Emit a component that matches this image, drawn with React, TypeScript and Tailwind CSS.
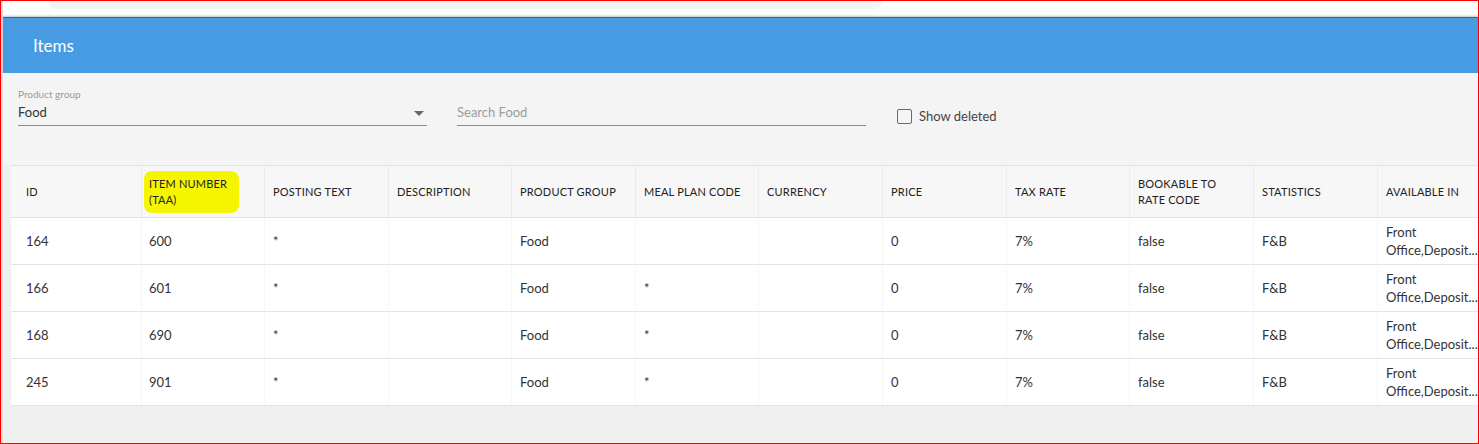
type Row = {
  id: string
  itemNumber: string
  postingText: string
  description: string
  productGroup: string
  mealPlan: string
  currency: string
  price: string
  taxRate: string
  bookable: string
  statistics: string
  availableIn: string
}

const columns = [
  { label: "ID", width: "w-[131px]", pad: "pl-[15px]" },
  { label: "ITEM NUMBER (TAA)", width: "w-[123px]", pad: "pl-[7px]", highlight: true },
  { label: "POSTING TEXT", width: "w-[124px]", pad: "pl-[8px]" },
  { label: "DESCRIPTION", width: "w-[123px]", pad: "pl-[8px]" },
  { label: "PRODUCT GROUP", width: "w-[124px]", pad: "pl-[8px]" },
  { label: "MEAL PLAN CODE", width: "w-[123px]", pad: "pl-[8px]" },
  { label: "CURRENCY", width: "w-[124px]", pad: "pl-[8px]" },
  { label: "PRICE", width: "w-[124px]", pad: "pl-[8px]" },
  { label: "TAX RATE", width: "w-[123px]", pad: "pl-[8px]" },
  { label: "BOOKABLE TO RATE CODE", width: "w-[124px]", pad: "pl-[8px]" },
  { label: "STATISTICS", width: "w-[124px]", pad: "pl-[8px]" },
  { label: "AVAILABLE IN", width: "w-[123px]", pad: "pl-[8px]" },
]

const rows: Row[] = [
  { id: "164", itemNumber: "600", postingText: "*", description: "", productGroup: "Food", mealPlan: "", currency: "", price: "0", taxRate: "7%", bookable: "false", statistics: "F&B", availableIn: "Office,Deposit..." },
  { id: "166", itemNumber: "601", postingText: "*", description: "", productGroup: "Food", mealPlan: "*", currency: "", price: "0", taxRate: "7%", bookable: "false", statistics: "F&B", availableIn: "Office,Deposit..." },
  { id: "168", itemNumber: "690", postingText: "*", description: "", productGroup: "Food", mealPlan: "*", currency: "", price: "0", taxRate: "7%", bookable: "false", statistics: "F&B", availableIn: "Office,Deposit..." },
  { id: "245", itemNumber: "901", postingText: "*", description: "", productGroup: "Food", mealPlan: "*", currency: "", price: "0", taxRate: "7%", bookable: "false", statistics: "F&B", availableIn: "Office,Deposit..." },
]

export default function App() {
  return (
    <div
      className="w-[1479px] h-[444px] overflow-hidden border border-[#ff0000] flex bg-white"
      style={{ fontFamily: "Lato, 'Open Sans', sans-serif" }}
    >
      {/* left edge shadow */}
      <div className="w-[2px] shrink-0 bg-gradient-to-r from-[#cfcfcf] to-[#e8e8e8]" />

      <div className="flex-1 min-w-0 flex flex-col">
        {/* top strip with card remnant */}
        <div className="h-[16px] shrink-0 bg-white pl-[45px]">
          <div className="w-[834px] h-[8px] bg-[#f4f4f4] rounded-b-[8px]" />
        </div>

        {/* blue title bar */}
        <div className="h-[56px] shrink-0 bg-[#469be3] border-t border-[#2f6aa0] shadow-[0_-1px_2px_rgba(0,0,0,0.25)] flex items-center pl-[30px]">
          <h1 className="text-white text-[17px] leading-none">Items</h1>
        </div>

        {/* filters */}
        <div className="h-[92px] shrink-0 bg-[#f4f4f4] pl-[15px] pt-[15px] flex items-start gap-[30px]">
          <div className="w-[409px]">
            <div className="text-[10px] leading-[12px] text-[#9a9a9a]">Product group</div>
            <div className="mt-[4px] h-[22px] border-b border-[#8a8a8a] flex items-center justify-between pb-[3px]">
              <span className="text-[13px] text-[#333]">Food</span>
              <svg width="10" height="5" viewBox="0 0 10 5" className="mr-[3px]">
                <path d="M0 0 L10 0 L5 5 Z" fill="#666" />
              </svg>
            </div>
          </div>

          <div className="w-[409px] pt-[16px]">
            <div className="h-[22px] border-b border-[#8a8a8a] flex items-center pb-[3px]">
              <span className="text-[13px] text-[#9d9d9d]">Search Food</span>
            </div>
          </div>

          <label className="flex items-center gap-[7px] pt-[19px] ml-[1px]">
            <span className="w-[15px] h-[15px] border border-[#6b6b6b] rounded-[2px] bg-transparent" />
            <span className="text-[13px] text-[#444]">Show deleted</span>
          </label>
        </div>

        {/* table */}
        <div className="flex-1 bg-[#f0f0f0] pl-[8px]">
          <div className="w-max">
            {/* header */}
            <div className="flex h-[53px] bg-[#f7f7f7] border-t border-b border-[#e2e2e2]">
              {columns.map((c) => (
                <div
                  key={c.label}
                  className={`${c.width} ${c.pad} shrink-0 flex items-center border-r border-[#ececec] text-[11px] leading-[16px] text-[#222] tracking-[0.2px]`}
                >
                  {c.highlight ? (
                    <span className="bg-[#f5f500] rounded-[8px] -ml-[5px] pl-[5px] pr-[6px] py-[5px] w-[95px] leading-[16px]">
                      ITEM NUMBER (TAA)
                    </span>
                  ) : (
                    <span className="pr-[10px]">{c.label}</span>
                  )}
                </div>
              ))}
            </div>

            {/* body */}
            {rows.map((r) => {
              const cells = [
                r.id,
                r.itemNumber,
                r.postingText,
                r.description,
                r.productGroup,
                r.mealPlan,
                r.currency,
                r.price,
                r.taxRate,
                r.bookable,
                r.statistics,
              ]
              return (
                <div key={r.id} className="flex h-[47px] bg-white border-b border-[#e5e5e5]">
                  {cells.map((v, i) => (
                    <div
                      key={i}
                      className={`${columns[i].width} ${columns[i].pad} shrink-0 flex items-center pt-[1px] border-r border-[#f6f6f6] text-[13px] text-[#333]`}
                    >
                      {v}
                    </div>
                  ))}
                  <div className="w-[92px] pl-[8px] shrink-0 flex flex-col justify-center text-[13px] leading-[18px] text-[#333] whitespace-nowrap">
                    <div>Front</div>
                    <div>{r.availableIn}</div>
                  </div>
                </div>
              )
            })}
          </div>
        </div>
      </div>
    </div>
  )
}
